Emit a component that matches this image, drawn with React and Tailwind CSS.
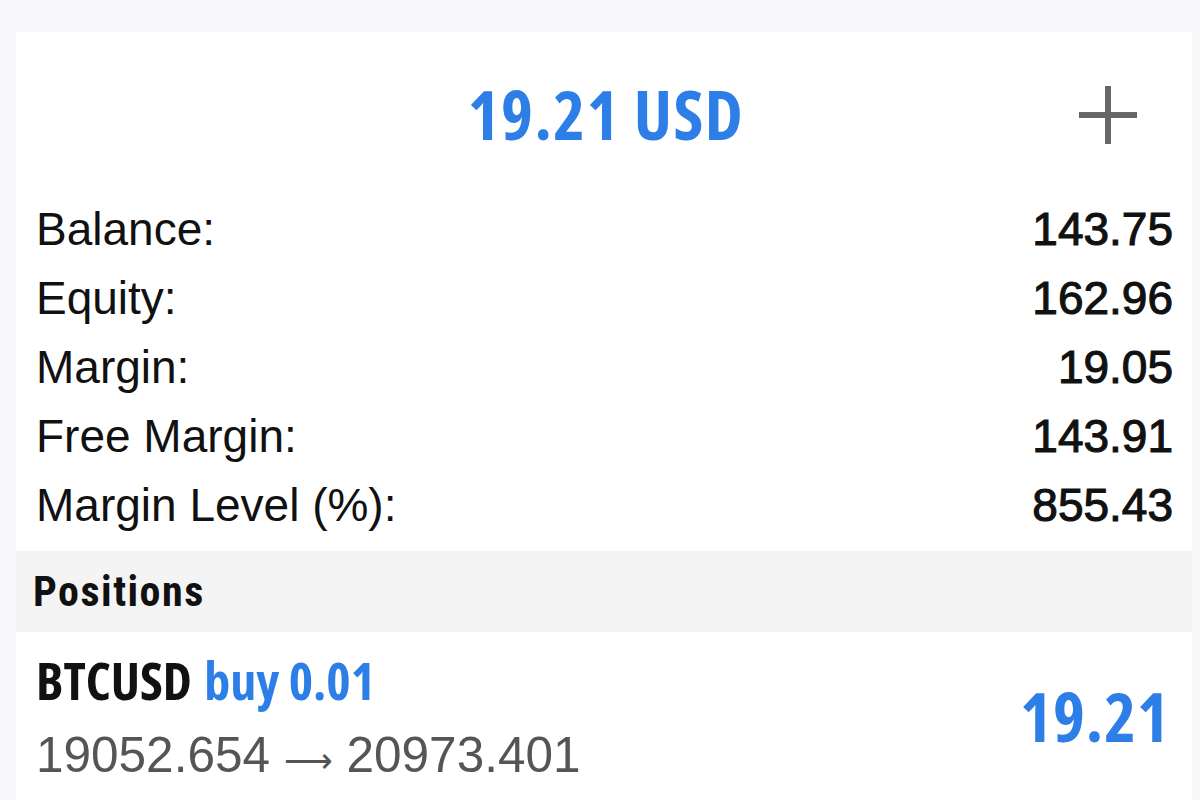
const cond = "font-['Open_Sans',sans-serif] [font-stretch:condensed]";

const rows = [
  ["Balance:", "143.75"],
  ["Equity:", "162.96"],
  ["Margin:", "19.05"],
  ["Free Margin:", "143.91"],
  ["Margin Level (%):", "855.43"],
];

function PlusIcon() {
  return (
    <svg width="58" height="58" viewBox="0 0 58 58" className="block">
      <line x1="29" y1="0" x2="29" y2="58" stroke="#666666" strokeWidth="6" />
      <line x1="0" y1="29" x2="58" y2="29" stroke="#666666" strokeWidth="6" />
    </svg>
  );
}

export default function App() {
  return (
    <div className="h-[800px] overflow-hidden bg-[#f9f9fb] pt-[32px] pl-[16px] pr-[8px] flex flex-col">
      <div className="flex-1 bg-white flex flex-col">
        {/* Header */}
        <div className="h-[163px] grid grid-cols-[1fr_auto_1fr] items-center">
          <div />
          <div className={`${cond} font-bold text-[68px] leading-none tracking-[1.5px] pl-[4px] text-[#2d7ee6]`}>19.21 USD</div>
          <div className="flex justify-end pr-[55px] pt-[3px]">
            <PlusIcon />
          </div>
        </div>

        {/* Account rows */}
        <div className="flex flex-col pl-[20px] pr-[19px] pb-[11px] font-['Liberation_Sans',Arial,sans-serif] text-[46px] leading-[69px] text-[#111111]">
          {rows.map(([label, value]) => (
            <div key={label} className="flex justify-between">
              <span>{label}</span>
              <span className="[-webkit-text-stroke:1.1px_#111111]">{value}</span>
            </div>
          ))}
        </div>

        {/* Positions header */}
        <div className="h-[81px] bg-[#f4f4f4] flex items-center px-[17px]">
          <span className="font-['Roboto_Condensed',sans-serif] font-bold text-[42px] leading-none tracking-[1.5px] text-[#111111]">
            Positions
          </span>
        </div>

        {/* Position item */}
        <div className="flex items-center justify-between pl-[20px] pr-[22px] pt-[18px]">
          <div className="flex flex-col">
            <div className={`${cond} font-bold text-[52px] leading-[60px]`}>
              <span className="text-[#111111]">BTCUSD</span>{" "}
              <span className="ml-[3px] text-[#2d7ee6]">buy 0.01</span>
            </div>
            <div className="mt-[15px] font-['Liberation_Sans',Arial,sans-serif] text-[49.5px] leading-[60px] text-[#555555] whitespace-nowrap">
              19052.654{" "}
              <span className="font-['DejaVu_Sans',sans-serif] text-[34px] font-light">⟶</span>{" "}
              20973.401
            </div>
          </div>
          <div className={`${cond} font-bold text-[68px] leading-none tracking-[1px] text-[#2d7ee6] mb-[9px]`}>19.21</div>
        </div>
      </div>
    </div>
  );
}
